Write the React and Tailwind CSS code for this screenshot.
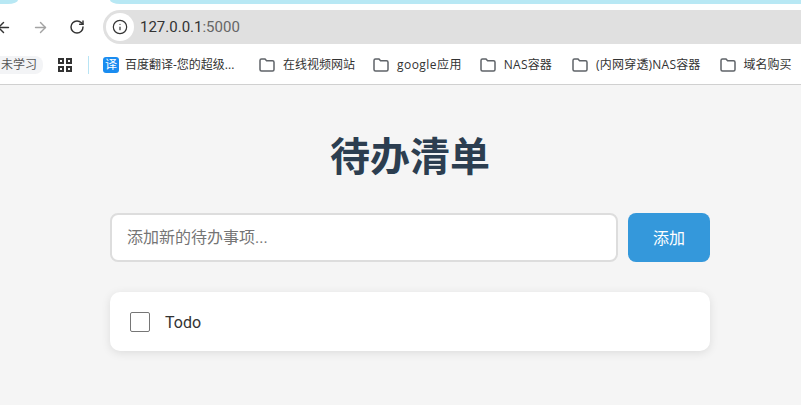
import React from 'react';
import { ArrowLeft, ArrowRight, RotateCw, Info } from 'lucide-react';

const FolderIcon = () => (
  <svg width="16" height="14" viewBox="0 0 16 14" fill="none" stroke="#5f6368" strokeWidth="1.5" className="shrink-0">
    <path d="M1 2.5 A1.5 1.5 0 0 1 2.5 1 H6 L7.6 2.8 H13.5 A1.5 1.5 0 0 1 15 4.3 V11.5 A1.5 1.5 0 0 1 13.5 13 H2.5 A1.5 1.5 0 0 1 1 11.5 Z" />
  </svg>
);

const Bookmark = ({ label, className, textClass = '' }) => (
  <div className={`flex items-center gap-2 shrink-0 ${className}`}>
    <FolderIcon />
    <span className={`whitespace-nowrap ${textClass}`}>{label}</span>
  </div>
);

const App = () => {
  return (
    <div className='h-[405px] w-[801px] overflow-hidden bg-[#f5f5f5] font-["Roboto","Noto_Sans_CJK_SC",sans-serif]'>
      {/* Tab strip */}
      <div className="flex h-[4px] justify-between bg-white">
        <div className="w-[18px] rounded-br-[10px_4px] bg-[#b8e8f4]"></div>
        <div className="w-[691px] rounded-bl-[10px_4px] bg-[#b8e8f4]"></div>
      </div>

      {/* Toolbar */}
      <div className="flex h-[44px] items-start bg-white pt-[6px]">
        <div className="flex h-[34px] w-[103px] items-center">
          <ArrowLeft size={17} strokeWidth={2} className="-ml-[5px] text-[#333333]" />
          <ArrowRight size={17} strokeWidth={2} className="ml-[20px] text-[#a3a3a3]" />
          <RotateCw size={16} strokeWidth={2.2} className="ml-[20px] text-[#333333]" />
        </div>
        <div className="flex h-[34px] flex-1 items-center rounded-l-[17px] bg-[#e0e0e0] pl-[3px]">
          <div className="flex h-[28px] w-[28px] items-center justify-center rounded-full bg-white">
            <Info size={16} strokeWidth={1.8} className="text-[#333333]" />
          </div>
          <span className="ml-[6px] pt-[1px] text-[15px] text-[#333333]">
            127.0.0.1<span className="text-[#666666]">:5000</span>
          </span>
        </div>
      </div>

      {/* Bookmarks bar */}
      <div className='flex h-[37px] items-center border-b border-[#d0d0d0] bg-white pb-[2px] font-["Open_Sans","Noto_Sans_CJK_SC",sans-serif] text-[12px] text-[#333333]'>
        <div className="flex h-[18px] w-[43px] shrink-0 items-center justify-end rounded-r-[8px] bg-[#f3f4f6] pr-[6px] text-[#555555]">
          <span className="whitespace-nowrap">未学习</span>
        </div>
        <div className="ml-[15px] grid h-[14px] w-[14px] shrink-0 grid-cols-2 grid-rows-2 gap-[2px]">
          <span className="border-2 border-[#333333]"></span>
          <span className="border-2 border-[#333333]"></span>
          <span className="border-2 border-[#333333]"></span>
          <span className="border-2 border-[#333333]"></span>
        </div>
        <div className="ml-[16px] h-[18px] w-[1px] shrink-0 bg-[#b8e4f4]"></div>
        <div className="ml-[14px] flex h-[16px] w-[16px] shrink-0 items-center justify-center rounded-[3px] bg-[#1a8cf0] text-[12px] text-white">
          译
        </div>
        <span className="ml-[6px] w-[111px] shrink-0 whitespace-nowrap">百度翻译-您的超级...</span>
        <Bookmark label="在线视频网站" className="ml-[23px]" />
        <Bookmark label="google应用" className="ml-[18px]" textClass="tracking-[0.45px]" />
        <Bookmark label="NAS容器" className="ml-[18px]" textClass="tracking-[0.2px]" />
        <Bookmark label="(内网穿透)NAS容器" className="ml-[20px]" textClass="tracking-[0.2px]" />
        <Bookmark label="域名购买" className="ml-[19px]" />
      </div>

      {/* Page */}
      <main className="ml-[110px] w-[600px]">
        <h1 className="mt-[45px] text-center text-[40px] leading-[56px] font-bold text-[#2c3e50]">待办清单</h1>
        <div className="mt-[27px] flex h-[49px] gap-[10px]">
          <input
            type="text"
            placeholder="添加新的待办事项..."
            className="min-w-0 flex-1 rounded-[8px] border-2 border-[#dddddd] bg-white px-[15px] pt-[1px] text-[16px] outline-none placeholder:text-[#757575]"
          />
          <button className="w-[82px] rounded-[8px] bg-[#3498db] pt-[3px] text-[16px] text-white">添加</button>
        </div>
        <div className="mt-[30px] flex h-[59px] items-center rounded-[10px] bg-white px-[20px] shadow-[0_2px_10px_rgba(0,0,0,0.1)]">
          <span className="h-[20px] w-[20px] rounded-[2px] border border-[#767676] bg-white"></span>
          <span className="ml-[15px] pt-[3px] text-[16px] text-[#333333]">Todo</span>
        </div>
      </main>
    </div>
  );
};

export default App;
